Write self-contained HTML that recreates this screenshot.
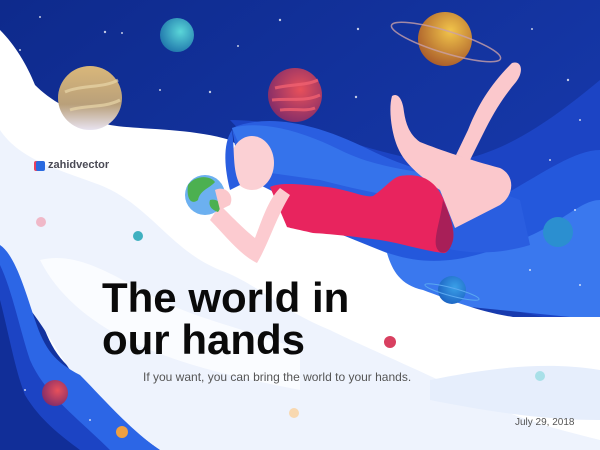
<!DOCTYPE html>
<html><head><meta charset="utf-8"><style>
html,body{margin:0;padding:0;width:600px;height:450px;overflow:hidden;background:#fff}
svg{position:absolute;left:0;top:0}
.t{position:absolute;font-family:"Liberation Sans",sans-serif;}
</style></head><body>
<svg width="600" height="450" viewBox="0 0 600 450">
<defs>
<linearGradient id="sky" x1="0" y1="0" x2="1" y2="1"><stop offset="0" stop-color="#0e2a8c"/><stop offset="1" stop-color="#1a3fb8"/></linearGradient>
<radialGradient id="teal" cx=".6" cy=".4" r=".7"><stop offset="0" stop-color="#5ad6d8"/><stop offset="1" stop-color="#1b6fa8"/></radialGradient>
<radialGradient id="gold" cx=".6" cy=".35" r=".7"><stop offset="0" stop-color="#f2c54a"/><stop offset="1" stop-color="#a85a2a"/></radialGradient>
<linearGradient id="tan" x1="0" y1="0" x2="0" y2="1"><stop offset="0" stop-color="#d9b77a"/><stop offset=".6" stop-color="#b9a07a"/><stop offset="1" stop-color="#e8e3f0"/></linearGradient>
<radialGradient id="red" cx=".6" cy=".4" r=".7"><stop offset="0" stop-color="#e8505a"/><stop offset="1" stop-color="#7a2a6a"/></radialGradient>
<radialGradient id="blu" cx=".6" cy=".4" r=".7"><stop offset="0" stop-color="#3aa0e8"/><stop offset="1" stop-color="#1a5fc0"/></radialGradient>
</defs>
<rect width="600" height="450" fill="url(#sky)"/>
<path d="M230,120 C300,120 360,150 420,160 C480,170 540,130 600,80 L600,330 L380,280 Z" fill="#1c44c4"/>
<path d="M250,170 C320,200 380,230 440,220 C500,210 560,150 600,150 L600,320 L390,290 Z" fill="#2458dc"/>
<path d="M380,250 C430,270 470,260 520,240 C560,225 580,200 600,200 L600,320 L400,300 Z" fill="#3a78ee"/>
<path d="M0,30 C15,45 27,65 35,85 C50,100 70,112 110,125 C140,130 190,128 230,140 L280,175 L330,230 L387,253 C392,270 400,285 423,290 C450,300 480,312 513,317 L600,317 L600,450 L160,450 C130,430 100,400 80,375 C55,360 45,335 35,300 C25,275 15,255 0,245 Z" fill="#ffffff"/>
<path d="M0,130 C20,160 60,170 100,185 C150,205 170,250 220,270 C260,285 280,310 330,330 C360,345 420,370 480,400 C520,420 560,430 600,440 L600,450 L160,450 C120,420 90,400 70,370 C50,340 30,300 0,280 Z" fill="#eef3fd"/>
<path d="M40,260 C80,250 120,280 160,300 C200,320 250,330 300,350 L300,390 C250,380 200,370 150,350 C100,330 60,300 40,260 Z" fill="#ffffff" opacity=".7"/>
<path d="M430,380 C480,370 540,360 600,370 L600,420 C540,420 480,410 430,400 Z" fill="#e6eefc"/>
<path d="M0,245 C15,255 25,290 35,320 C45,350 55,362 80,375 C100,395 130,430 160,450 L0,450 Z" fill="#2c66e6"/>
<path d="M0,265 C12,290 20,330 30,360 C45,395 80,420 110,450 L0,450 Z" fill="#1c44c4"/>
<path d="M0,300 C8,330 15,370 25,395 C40,420 60,435 80,450 L0,450 Z" fill="#112e98"/>
<g fill="#fff" opacity=".75">
<circle cx="40" cy="17" r="1"/><circle cx="105" cy="32" r="1.2"/><circle cx="122" cy="33" r="1"/><circle cx="280" cy="20" r="1.2"/><circle cx="358" cy="29" r="1.2"/><circle cx="238" cy="46" r="1"/><circle cx="160" cy="90" r="1"/><circle cx="210" cy="92" r="1.2"/><circle cx="356" cy="97" r="1.2"/><circle cx="532" cy="29" r="1"/><circle cx="568" cy="80" r="1.2"/><circle cx="550" cy="160" r="1"/><circle cx="575" cy="210" r="1"/><circle cx="530" cy="270" r="1"/><circle cx="580" cy="285" r="1"/><circle cx="25" cy="390" r="1"/><circle cx="90" cy="420" r="1"/><circle cx="470" cy="130" r="1"/><circle cx="320" cy="140" r="1"/><circle cx="580" cy="120" r="1"/><circle cx="20" cy="50" r="1"/><circle cx="500" cy="220" r="1"/>
</g>
<circle cx="177" cy="35" r="17" fill="url(#teal)"/>
<circle cx="90" cy="98" r="32" fill="url(#tan)"/>
<path d="M65,92 C80,85 105,88 118,80 M70,110 C85,105 105,108 120,100" stroke="#e8d6a8" stroke-width="3" fill="none" opacity=".7"/>
<circle cx="295" cy="95" r="27" fill="url(#red)"/>
<path d="M275,88 C290,84 305,86 318,80 M272,100 C290,98 305,102 320,95 M280,110 C295,108 305,112 315,108" stroke="#f06070" stroke-width="3" fill="none" opacity=".8"/>
<circle cx="445" cy="39" r="27" fill="url(#gold)"/>
<ellipse cx="446" cy="42" rx="57" ry="11" transform="rotate(17 446 42)" fill="none" stroke="#c9a0a8" stroke-width="1.5" opacity=".8"/>
<circle cx="558" cy="232" r="15" fill="#2b8fd0"/>
<circle cx="452" cy="290" r="14" fill="url(#blu)"/>
<ellipse cx="452" cy="292" rx="28" ry="4" transform="rotate(15 452 292)" fill="none" stroke="#5aa8f0" stroke-width="1"/>
<circle cx="41" cy="222" r="5" fill="#f0b8c8"/>
<circle cx="138" cy="236" r="5" fill="#3fb0c0"/>
<circle cx="390" cy="342" r="6" fill="#d84060"/>
<circle cx="540" cy="376" r="5" fill="#a8e0e8"/>
<circle cx="55" cy="393" r="13" fill="url(#red)"/>
<circle cx="122" cy="432" r="6" fill="#f0a040"/>
<circle cx="294" cy="413" r="5" fill="#f8d8b0"/>
<path d="M232,128 C270,112 320,125 370,150 C420,175 470,180 520,200 L530,245 C480,260 440,250 410,235 C360,210 320,200 280,195 L240,175 Z" fill="#2a5ee0"/>
<path d="M232,128 C260,120 300,130 340,150 C380,170 420,170 460,180 L440,200 C400,200 360,190 320,180 L250,170 Z" fill="#3a7cf0" opacity=".7"/>
<!-- legs -->
<path d="M392,96 C398,92 403,100 404,112 C406,125 410,135 420,142 C440,150 470,160 500,168 C515,175 515,195 500,205 L455,228 L440,190 C425,180 405,165 398,148 C392,135 388,110 392,96 Z" fill="#fbc8cc"/>
<path d="M512,63 C522,60 524,72 516,82 C505,95 495,110 485,130 L470,160 L456,155 L468,130 C478,105 490,85 512,63 Z" fill="#fbc8cc"/>
<path d="M270,187 C280,182 300,184 327,187 C350,190 365,198 373,196 C385,188 392,178 400,176 C415,174 432,175 443,198 C450,215 455,230 453,240 C450,250 446,254 443,253 C420,250 400,243 380,240 C350,236 330,234 313,233 C300,230 290,228 287,227 Z" fill="#e8245e"/>
<path d="M443,200 C450,215 455,230 453,240 C450,252 445,254 440,252 C430,245 440,225 443,200 Z" fill="#a81f58"/>
<ellipse cx="252" cy="163" rx="22" ry="27" fill="#fbd0d4"/>
<path d="M232,130 C235,150 232,170 240,185 L230,190 C225,170 222,145 232,130 Z" fill="#2a5ee0"/>
<path d="M290,195 C275,220 268,245 257,263 C240,255 225,235 210,220 L220,205 C235,220 245,230 255,238 C262,220 268,200 280,188 Z" fill="#fccbd0"/>
<circle cx="205" cy="195" r="20" fill="#6cb0f0"/>
<path d="M188,185 C195,175 210,175 215,182 C210,188 200,190 198,200 C192,205 186,200 188,185 Z M210,200 C218,198 224,205 218,212 C212,210 208,206 210,200 Z" fill="#4cb050"/>
<path d="M215,190 C225,185 235,195 230,205 L220,210 Z" fill="#fbc8cc"/>
</svg>
<div class="t" style="left:36px;top:161px;width:9px;height:10px;background:#2a6ae0;border-radius:2px;box-shadow:-2px 0 0 #e84060"></div>
<div class="t" style="left:48px;top:159px;font-size:11px;font-weight:bold;color:#4a4a55;">zahidvector</div>
<div class="t" style="left:102px;top:277px;font-size:42px;font-weight:bold;color:#0a0a0a;line-height:42px;">The world in<br>our hands</div>
<div class="t" style="left:143px;top:370px;font-size:12px;color:#555;">If you want, you can bring the world to your hands.</div>
<div class="t" style="left:515px;top:417px;font-size:10px;color:#555;">July 29, 2018</div>
</body></html>
